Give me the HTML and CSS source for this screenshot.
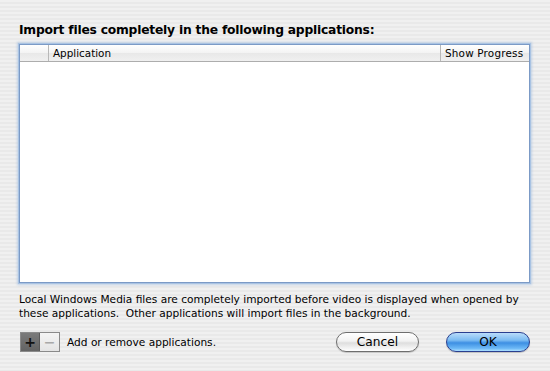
FILE: index.html
```html
<!DOCTYPE html>
<html lang="en">
<head>
  <meta charset="UTF-8">
  <title>Import Options</title>
  <link rel="stylesheet" href="styles.css">
</head>
<body>
  <div class="sheet">
    <h1 class="title">Import files completely in the following applications:</h1>

    <div class="list">
      <div class="list-head">
        <div class="col col-check"></div>
        <div class="col col-app">Application</div>
        <div class="col col-progress">Show Progress</div>
      </div>
      <div class="list-body"></div>
    </div>

    <p class="note">Local Windows Media files are completely imported before video is displayed when opened by these applications.&nbsp; Other applications will import files in the background.</p>

    <div class="footer">
      <div class="seg">
        <button class="seg-btn seg-add">+</button>
        <button class="seg-btn seg-remove">&minus;</button>
      </div>
      <span class="seg-label">Add or remove applications.</span>
      <div class="actions">
        <button class="pill pill-cancel">Cancel</button>
        <button class="pill pill-ok">OK</button>
      </div>
    </div>
  </div>
</body>
</html>
```

FILE: styles.css
```css
html, body {
  margin: 0;
  padding: 0;
}
body {
  width: 550px;
  height: 371px;
  overflow: hidden;
  font-family: "DejaVu Sans", "Liberation Sans", sans-serif;
  color: #000;
  background: repeating-linear-gradient(to bottom, #f0f0f0 0, #f0f0f0 2px, #e9e9e9 2px, #e9e9e9 4px);
}
.sheet {
  padding: 22px 20px 0 19px;
}
.title {
  margin: 0;
  font-size: 12.3px;
  line-height: 17px;
  font-weight: bold;
  letter-spacing: -0.22px;
}
.list {
  margin-top: 5px;
  height: 237px;
  background: #fff;
  border: 1px solid #7b9ac6;
  box-shadow: 0 0 0 1px #a9c3e3, 0 0 2px 2px rgba(140, 175, 220, 0.45);
  display: flex;
  flex-direction: column;
}
.list-head {
  display: flex;
  height: 16px;
  border-bottom: 1px solid #adadad;
  background: linear-gradient(to bottom, #ffffff 0%, #f3f3f3 50%, #e8e8e8 51%, #f0f0f0 100%);
  font-size: 10.4px;
  line-height: 16px;
}
.col {
  padding-left: 4px;
}
.col-check {
  width: 24px;
  border-right: 1px solid #b8b8b8;
}
.col-app {
  flex: 1;
}
.col-progress {
  width: 84px;
  border-left: 1px solid #b8b8b8;
  letter-spacing: 0.2px;
}
.list-body {
  flex: 1;
}
.note {
  margin: 9px 0 0;
  font-size: 10.6px;
  line-height: 14px;
}
.footer {
  display: flex;
  align-items: center;
  margin-top: 12px;
}
.seg {
  display: flex;
  margin-left: 1px;
  border: 1px solid #8a8a8a;
}
.seg-btn {
  width: 19px;
  height: 18px;
  padding: 0;
  border: 0;
  font-family: "DejaVu Sans", sans-serif;
  font-weight: bold;
  font-size: 14px;
  line-height: 18px;
}
.seg-add {
  background: linear-gradient(to bottom, #7a7a7a, #636363);
  color: #111;
  border-right: 1px solid #595959;
}
.seg-remove {
  background: linear-gradient(to bottom, #f4f4f4, #e4e4e4);
  color: #a8a8a8;
}
.seg-label {
  margin-left: 7px;
  font-size: 10.6px;
}
.actions {
  margin-left: auto;
  display: flex;
  gap: 27px;
}
.pill {
  height: 20px;
  padding: 0;
  border-radius: 10px;
  font-family: "DejaVu Sans", sans-serif;
  font-size: 12.2px;
  line-height: 18px;
  color: #000;
}
.pill-cancel {
  width: 83px;
  border: 1px solid #6e6e6e;
  background: linear-gradient(to bottom, #ffffff 0%, #f2f2f2 45%, #dedede 55%, #f4f4f4 85%, #ffffff 100%);
  box-shadow: 0 1px 1px rgba(0, 0, 0, 0.18);
}
.pill-ok {
  width: 84px;
  border: 1px solid #2a3f8f;
  background: linear-gradient(to bottom, #b9dcfa 0%, #7cbcf2 40%, #3d8fe3 55%, #6cb8f6 85%, #aee0ff 100%);
  box-shadow: 0 1px 1px rgba(0, 0, 0, 0.2);
}
```
